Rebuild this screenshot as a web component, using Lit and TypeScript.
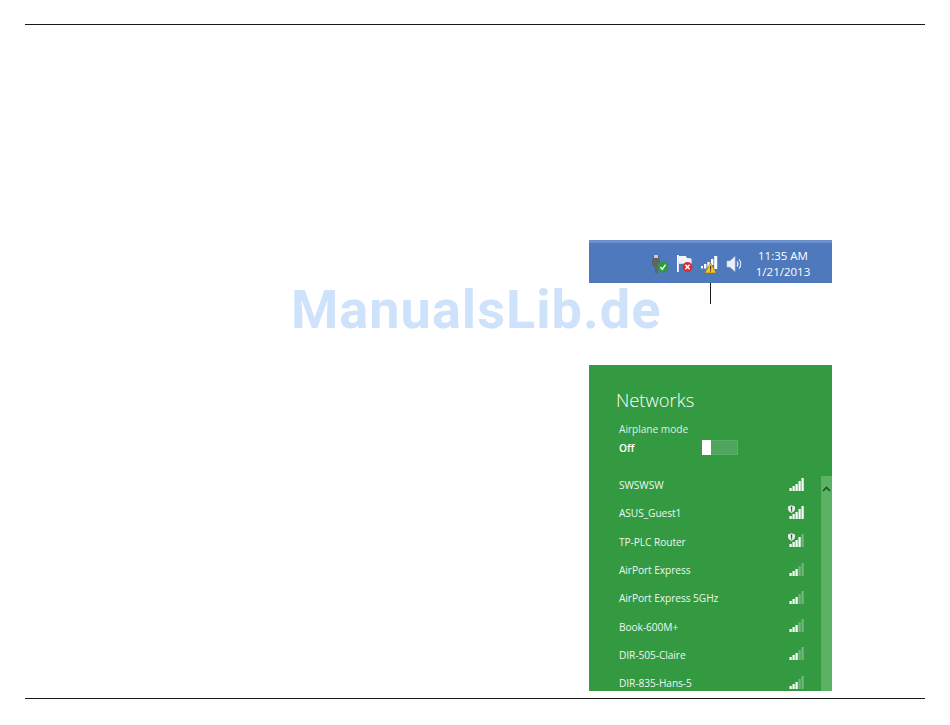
import { LitElement, html, css, svg } from "lit";
import { customElement } from "lit/decorators.js";

const NETS: [string, number, boolean][] = [
  ["SWSWSW", 5, false],
  ["ASUS_Guest1", 5, true],
  ["TP-PLC Router", 4, true],
  ["AirPort Express", 3, false],
  ["AirPort Express 5GHz", 3, false],
  ["Book-600M+", 3, false],
  ["DIR-505-Claire", 3, false],
  ["DIR-835-Hans-5", 3, false],
];

function signal(level: number, secured: boolean) {
  const hs = [3, 5, 7, 10, 13];
  return html`<svg class="sig" width="18" height="16" viewBox="0 0 18 16">
    ${hs.map(
      (h, i) => svg`<rect x="${1.5 + i * 3}" y="${14 - h}" width="2.2" height="${h}" fill="#fff" opacity="${i < level ? 1 : 0.3}"></rect>`
    )}
    ${secured
      ? svg`<path d="M0 1.5 L3.5 0.3 L7 1.5 V4 C7 6 5 7.2 3.5 8 C2 7.2 0 6 0 4 Z" fill="#e8efe8"></path>
            <rect x="2.9" y="1.5" width="1.3" height="3.2" fill="#444"></rect><rect x="2.9" y="5.3" width="1.3" height="1.2" fill="#444"></rect>`
      : ""}
  </svg>`;
}

@customElement("app-root")
export class AppRoot extends LitElement {
  static styles = css`
    :host { display: block; position: relative; width: 950px; height: 725px; background: #fff; overflow: hidden; font-family: "Open Sans", "Liberation Sans", sans-serif; }
    .rule { height: 1px; background: #1a1a1a; margin: 0 25px; }
    .top { margin-top: 24px; }
    .col { width: 243px; margin-left: 589px; }
    .tray { margin-top: 215px; height: 43px; box-sizing: border-box; background: #4e79bc; border-top: 3px solid #6b92cf; display: flex; align-items: center; }
    .icons { display: flex; align-items: center; margin-left: 62px; gap: 5px; width: 103px; margin-top: 2px; }
    .clock { color: #fff; font-size: 11.5px; line-height: 16px; text-align: center; width: 58px; margin-top: 1px; white-space: nowrap; }
    .callout { width: 1px; height: 21px; background: #1a1a1a; margin-left: 121px; }
    .panel { margin-top: 61px; height: 326px; background: #339a42; color: #fff; display: flex; flex-direction: column; overflow: hidden; }
    .title { font-size: 18.4px; font-weight: 300; margin: 23px 0 0 27px; line-height: 24px; }
    .amode { font-size: 10.2px; line-height: 14px; margin: 10px 0 0 30px; color: #dfefe1; letter-spacing: -0.05px; }
    .offrow { display: flex; align-items: center; margin: 4px 0 0 30px; height: 15px; }
    .off { font-size: 10.2px; font-weight: 600; width: 83px; }
    .toggle { width: 36px; height: 15px; box-sizing: border-box; background: #4fa55c; border: 1px solid #5cae68; }
    .knob { width: 9px; height: 15px; background: #fff; margin: -1px 0 0 -1px; }
    .list { display: flex; margin-top: 13px; flex: 1; min-height: 0; }
    .rows { flex: 1; padding-top: 3px; }
    .row { height: 28.3px; display: flex; align-items: center; padding-left: 30px; font-size: 10.2px; letter-spacing: -0.08px; color: #eef7ef; }
    .row .n { width: 169px; white-space: nowrap; }
    .sig { display: block; margin-top: -1px; }
    .scroll { width: 11px; margin-top: 8px; background: #5bb264; display: flex; justify-content: center; align-items: flex-start; padding-top: 10px; box-sizing: border-box; }
    .bottom { margin-top: 7px; }
    .wm { position: absolute; left: 291px; top: 277px; font-family: Roboto, sans-serif; font-weight: 700; font-size: 54px; line-height: 66px; letter-spacing: 1.05px; color: #cfe2fb; white-space: nowrap; }
  `;

  render() {
    return html`
      <div class="rule top"></div>
      <div class="col">
        <div class="tray">
          <div class="icons">
            <svg width="20" height="20" viewBox="0 0 20 20">
              <path d="M2 1h6v4h1v7l-2 2v5H4v-5L1 11V5h1z" fill="#5f6468"></path>
              <rect x="3" y="1" width="4" height="3" fill="#c9ced2"></rect>
              <circle cx="12" cy="13" r="5.6" fill="#2d9a3c"></circle>
              <path d="M9.4 13l1.9 2.3 3.2-4.6" fill="none" stroke="#fff" stroke-width="1.4"></path>
            </svg>
            <svg width="20" height="20" viewBox="0 0 20 20">
              <path d="M1 1h1.8v17H1z" fill="#fff"></path>
              <path d="M2.8 2h7l1.2 2 4.5.5v7H8.5l-1-1.8H2.8z" fill="#f4f4f4"></path>
              <circle cx="11.5" cy="13" r="5" fill="#d92b3a"></circle>
              <path d="M9.4 10.8l4.2 4.4M13.6 10.8l-4.2 4.4" stroke="#fff" stroke-width="1.5"></path>
            </svg>
            <svg width="20" height="20" viewBox="0 0 20 20">
              <rect x="0" y="12" width="2" height="2.5" fill="#fff"></rect>
              <rect x="3" y="10" width="2.4" height="4.5" fill="#fff"></rect>
              <rect x="6.4" y="8" width="2.4" height="5" fill="#fff"></rect>
              <rect x="10" y="5" width="2.4" height="6" fill="#fff"></rect>
              <rect x="13.2" y="2" width="3" height="13" fill="#fff"></rect>
              <path d="M9.5 8.5L15.2 19H3.8Z" fill="#f5c518" stroke="#8a6a10" stroke-width=".5"></path>
              <rect x="9" y="12" width="1.1" height="3.6" fill="#333"></rect>
              <rect x="9" y="16.4" width="1.1" height="1.2" fill="#333"></rect>
            </svg>
            <svg width="18" height="20" viewBox="0 0 18 20">
              <path d="M1 7h3l5-4.5v15L4 13H1z" fill="#eaf0f8" stroke="#bfcde4" stroke-width=".6"></path>
              <path d="M11 7.5c1.2 1.5 1.2 3.5 0 5M13 5.5c2.2 2.6 2.2 6.4 0 9" fill="none" stroke="#fff" stroke-width="1.1"></path>
            </svg>
          </div>
          <div class="clock">11:35 AM<br />1/21/2013</div>
        </div>
        <div class="callout"></div>
        <div class="panel">
          <div class="title">Networks</div>
          <div class="amode">Airplane mode</div>
          <div class="offrow">
            <div class="off">Off</div>
            <div class="toggle"><div class="knob"></div></div>
          </div>
          <div class="list">
            <div class="rows">
              ${NETS.map(([n, l, s]) => html`<div class="row"><div class="n">${n}</div>${signal(l, s)}</div>`)}
            </div>
            <div class="scroll">
              <svg width="9" height="6" viewBox="0 0 9 6"><path d="M1 5l3.5-3.5L8 5" fill="none" stroke="#1e4d28" stroke-width="1.6"></path></svg>
            </div>
          </div>
        </div>
      </div>
      <div class="rule bottom"></div>
      <div class="wm">ManualsLib.de</div>
    `;
  }
}
